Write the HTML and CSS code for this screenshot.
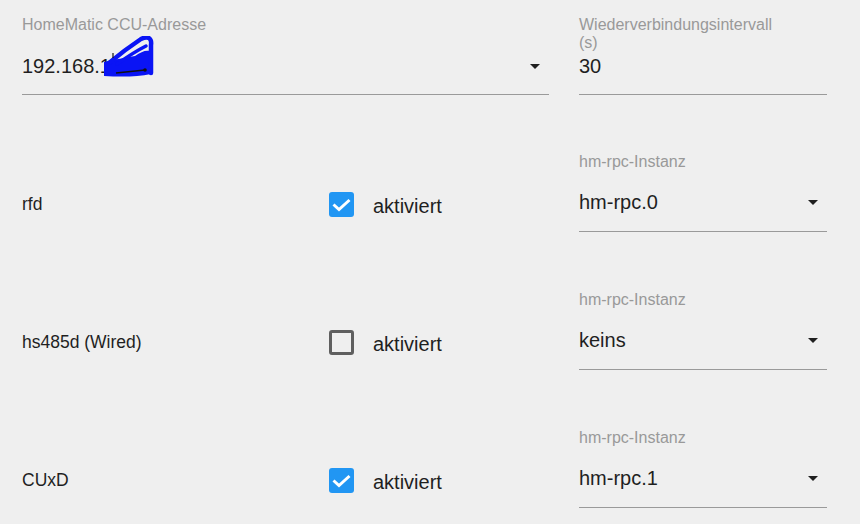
FILE: index.html
```html
<!DOCTYPE html>
<html lang="de">
<head>
<meta charset="utf-8">
<title>HomeMatic</title>
<link rel="stylesheet" href="styles.css">
</head>
<body>
<div class="form">
  <div class="top-row">
    <div class="field wide">
      <div class="label">HomeMatic CCU-Adresse</div>
      <div class="input">
        <span class="value">192.168.1</span>
        <svg class="scribble" viewBox="0 0 60 45" width="60" height="45" aria-hidden="true">
          <path d="M9 26 C20 23 30 22 40 20 C46 16 50 14 55 15 L56 38 C42 41 26 41 9 40 Z" fill="#0a14f5"/>
          <path d="M14 27 C26 17 37 9 46 3 C53 -0.5 57 2 56 9 L56 37" fill="none" stroke="#0a14f5" stroke-width="4.5" stroke-linecap="round"/>
          <path d="M22 28 C32 21 41 15 51 10" fill="none" stroke="#0a14f5" stroke-width="3.5" stroke-linecap="round"/>
          <path d="M21 37 L50 34" stroke="#111" stroke-width="1.5"/>
          <circle cx="50" cy="34" r="1.8" fill="#111"/>
          <path d="M18 17 L18 22" stroke="#111" stroke-width="1.2"/>
        </svg>
        <svg class="arrow" viewBox="0 0 24 24"><path d="M7 10l5 5 5-5z"/></svg>
      </div>
    </div>
    <div class="field narrow">
      <div class="label"><span class="wrap">Wiederverbindungsintervall (s)</span></div>
      <div class="input">
        <span class="value">30</span>
      </div>
    </div>
  </div>

  <div class="rows">
    <div class="row">
      <div class="name">rfd</div>
      <div class="control">
        <span class="box checked"><svg viewBox="0 0 25 25"><polyline points="4.5,12.5 10,17.5 20.5,8"/></svg></span>
        <span class="ctext">aktiviert</span>
      </div>
      <div class="field narrow">
        <div class="label">hm-rpc-Instanz</div>
        <div class="input">
          <span class="value">hm-rpc.0</span>
          <svg class="arrow" viewBox="0 0 24 24"><path d="M7 10l5 5 5-5z"/></svg>
        </div>
      </div>
    </div>

    <div class="row">
      <div class="name">hs485d (Wired)</div>
      <div class="control">
        <span class="box"></span>
        <span class="ctext">aktiviert</span>
      </div>
      <div class="field narrow">
        <div class="label">hm-rpc-Instanz</div>
        <div class="input">
          <span class="value">keins</span>
          <svg class="arrow" viewBox="0 0 24 24"><path d="M7 10l5 5 5-5z"/></svg>
        </div>
      </div>
    </div>

    <div class="row">
      <div class="name">CUxD</div>
      <div class="control">
        <span class="box checked"><svg viewBox="0 0 25 25"><polyline points="4.5,12.5 10,17.5 20.5,8"/></svg></span>
        <span class="ctext">aktiviert</span>
      </div>
      <div class="field narrow">
        <div class="label">hm-rpc-Instanz</div>
        <div class="input">
          <span class="value">hm-rpc.1</span>
          <svg class="arrow" viewBox="0 0 24 24"><path d="M7 10l5 5 5-5z"/></svg>
        </div>
      </div>
    </div>
  </div>
</div>
</body>
</html>
```
FILE: styles.css
```css
html, body {
  margin: 0;
  padding: 0;
  background: #efefef;
  font-family: "Liberation Sans", Arial, sans-serif;
  color: #1f1f1f;
}

.form {
  padding: 16px 0 0 22px;
}

.top-row {
  display: flex;
  gap: 30px;
}

.wide {
  width: 527px;
}

.narrow {
  width: 248px;
}

.label {
  height: 37px;
  font-size: 16px;
  line-height: 18px;
  color: #999999;
}

.label .wrap {
  display: block;
  max-width: 200px;
}

.input {
  position: relative;
  display: flex;
  align-items: center;
  height: 24px;
  padding-bottom: 17px;
  border-bottom: 1px solid #9a9a9a;
}

.top-row .input {
  padding-top: 1px;
  padding-bottom: 16px;
}

.value {
  flex: 1;
  font-size: 20px;
  line-height: 24px;
  color: #1f1f1f;
  white-space: nowrap;
}

.arrow {
  width: 24px;
  height: 24px;
  margin-right: 2px;
  fill: #1f1f1f;
}

.scribble {
  position: absolute;
  left: 73px;
  top: -17px;
}

.rows {
  margin-top: 58px;
  display: flex;
  flex-direction: column;
  gap: 59px;
}

.row {
  display: grid;
  grid-template-columns: 307px 250px 248px;
}

.name {
  padding-top: 39px;
  font-size: 17.5px;
  line-height: 24px;
  color: #1f1f1f;
}

.control {
  display: flex;
  align-items: flex-start;
  padding-top: 39px;
}

.box {
  box-sizing: border-box;
  width: 25px;
  height: 25px;
  border: 3px solid #5f5f5f;
  border-radius: 3px;
  flex: none;
}

.box.checked {
  border: none;
  background: #2196f3;
}

.box svg {
  display: block;
  width: 25px;
  height: 25px;
}

.box svg polyline {
  fill: none;
  stroke: #ffffff;
  stroke-width: 3;
}

.ctext {
  margin-left: 19px;
  margin-top: 2px;
  font-size: 20px;
  line-height: 24px;
  color: #1f1f1f;
}
```
